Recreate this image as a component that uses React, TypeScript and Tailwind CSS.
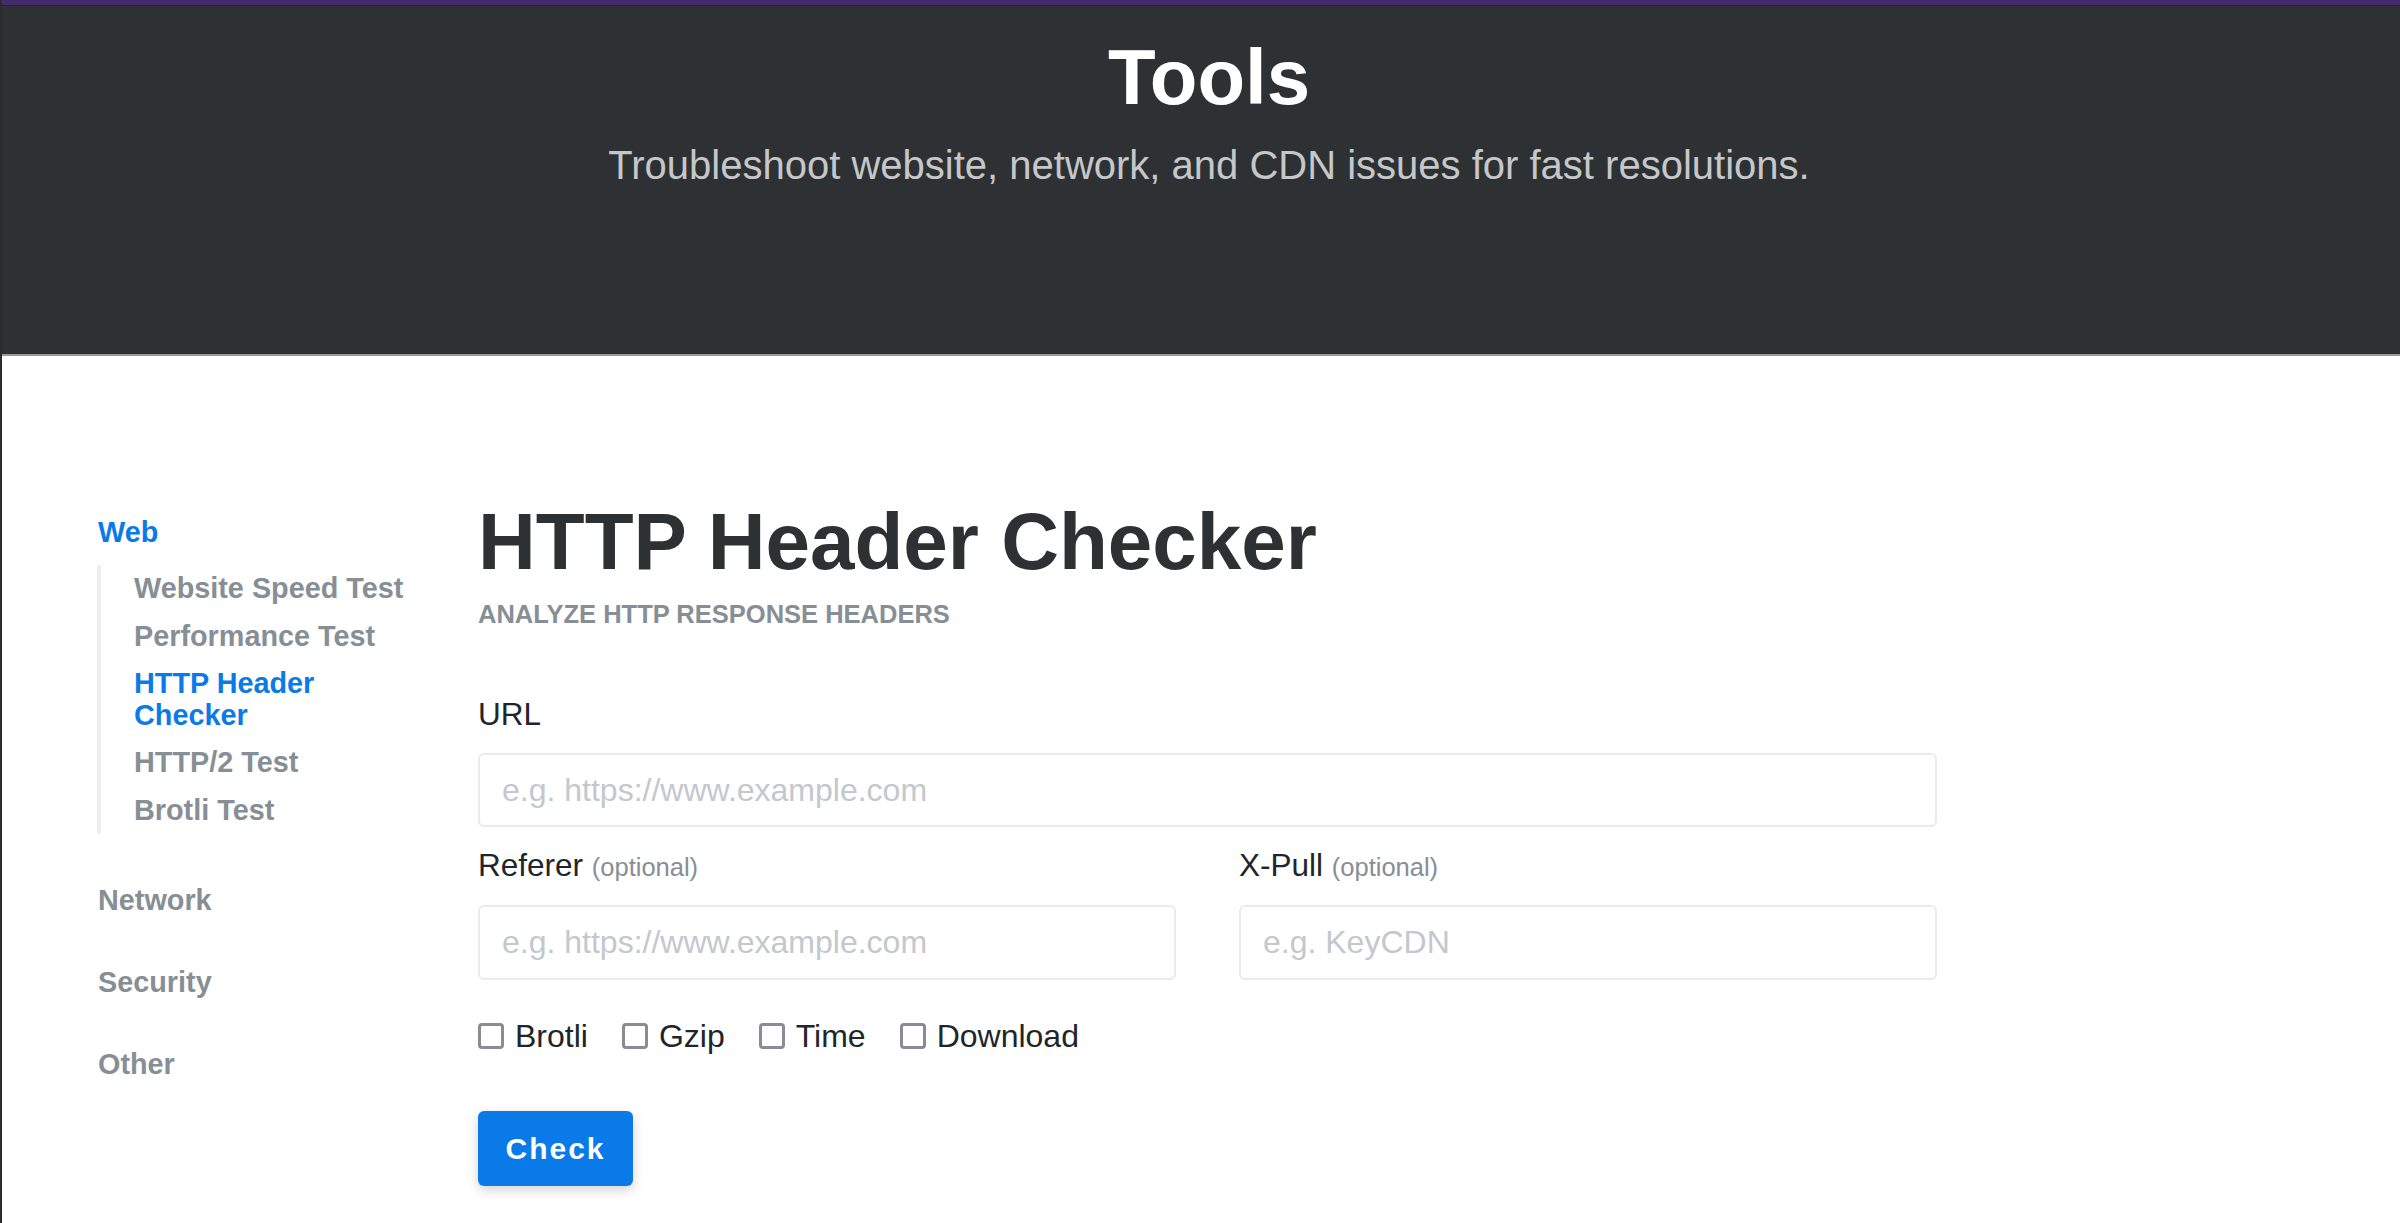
import React from "react";

const FONT = "font-['Liberation_Sans',Arial,Helvetica,sans-serif]";

function Check({ label }: { label: string }) {
  return (
    <label className="flex items-center">
      <span className="w-[26px] h-[26px] border-[3.5px] border-[#8a8a98] rounded-[4px] bg-white shrink-0" />
      <span className="ml-[11px] text-[32px] leading-[48px] text-[#212529]">{label}</span>
    </label>
  );
}

export default function App() {
  const sub = [
    { t: "Website Speed Test", a: false },
    { t: "Performance Test", a: false },
    { t: "HTTP Header Checker", a: true },
    { t: "HTTP/2 Test", a: false },
    { t: "Brotli Test", a: false },
  ];
  return (
    <div className={`min-h-screen bg-white border-l-2 border-[#2b2b2b] ${FONT}`}>
      <div className="h-[5px] bg-[#452a6e]" />
      <div className="h-[1px] bg-[#2a1f3d]" />
      <header className="bg-[#2e3134] h-[350px] pt-[24px] pl-[16px] text-center border-b-2 border-[#9a9a9a]">
        <h1 className="text-[78px] leading-[94px] font-bold text-white">Tools</h1>
        <p className="mt-[11px] text-[40px] leading-[60px] text-[#c5c7c9]">
          Troubleshoot website, network, and CDN issues for fast resolutions.
        </p>
      </header>
      <div className="flex pl-[95px]">
        <aside className="w-[326px] pt-[160.8px] shrink-0">
          <div className="pl-[1px] text-[28.8px] leading-[31.5px] font-bold text-[#0a7ae8]">Web</div>
          <ul className="mt-[17px] border-l-4 border-[#eeeeee] pl-[33px]">
            {sub.map((s) => (
              <li
                key={s.t}
                className={`py-[8px] text-[28.8px] leading-[31.5px] font-bold ${s.a ? "text-[#0a7ae8]" : "text-[#868e96]"}`}
              >
                {s.t}
              </li>
            ))}
          </ul>
          <div className="mt-[51px] flex flex-col gap-[50.5px] pl-[1px] text-[28.8px] leading-[31.5px] font-bold text-[#868e96]">
            <div>Network</div>
            <div>Security</div>
            <div>Other</div>
          </div>
        </aside>
        <main className="ml-[55px] w-[1459px] pt-[137.6px]">
          <h2 className="text-[80px] leading-[96px] font-bold text-[#2e3134]">HTTP Header Checker</h2>
          <div className="mt-[5.5px] text-[25.5px] leading-[38.25px] font-bold text-[#868e96]">
            ANALYZE HTTP RESPONSE HEADERS
          </div>
          <div className="mt-[57.75px] text-[31.5px] leading-[47.25px] text-[#212529]">URL</div>
          <input
            className="mt-[14.5px] block w-full h-[74.5px] border-2 border-[#e9ecef] rounded-[6px] px-[22px] text-[32px] text-[#212529] placeholder:text-[#c3c8ce] outline-none"
            placeholder="e.g. https://www.example.com"
          />
          <div className="mt-[15px] grid grid-cols-2 gap-x-[63px]">
            <div>
              <div className="text-[31.5px] leading-[47.25px] text-[#212529]">
                Referer <span className="text-[25.5px] text-[#868e96]">(optional)</span>
              </div>
              <input
                className="mt-[13.5px] block w-full h-[74.5px] border-2 border-[#e9ecef] rounded-[6px] px-[22px] text-[32px] text-[#212529] placeholder:text-[#c3c8ce] outline-none"
                placeholder="e.g. https://www.example.com"
              />
            </div>
            <div>
              <div className="text-[31.5px] leading-[47.25px] text-[#212529]">
                X-Pull <span className="text-[25.5px] text-[#868e96]">(optional)</span>
              </div>
              <input
                className="mt-[13.5px] block w-full h-[74.5px] border-2 border-[#e9ecef] rounded-[6px] px-[22px] text-[32px] text-[#212529] placeholder:text-[#c3c8ce] outline-none"
                placeholder="e.g. KeyCDN"
              />
            </div>
          </div>
          <div className="mt-[32.5px] flex items-center gap-[34px]">
            <Check label="Brotli" />
            <Check label="Gzip" />
            <Check label="Time" />
            <Check label="Download" />
          </div>
          <button className="mt-[51px] w-[155px] h-[75px] rounded-[6px] bg-[#0a7ae8] text-white text-[30px] font-bold tracking-[2px] shadow-[0_4px_12px_rgba(0,0,0,0.18)]">
            Check
          </button>
          <div className="h-[80px]" />
        </main>
      </div>
    </div>
  );
}
